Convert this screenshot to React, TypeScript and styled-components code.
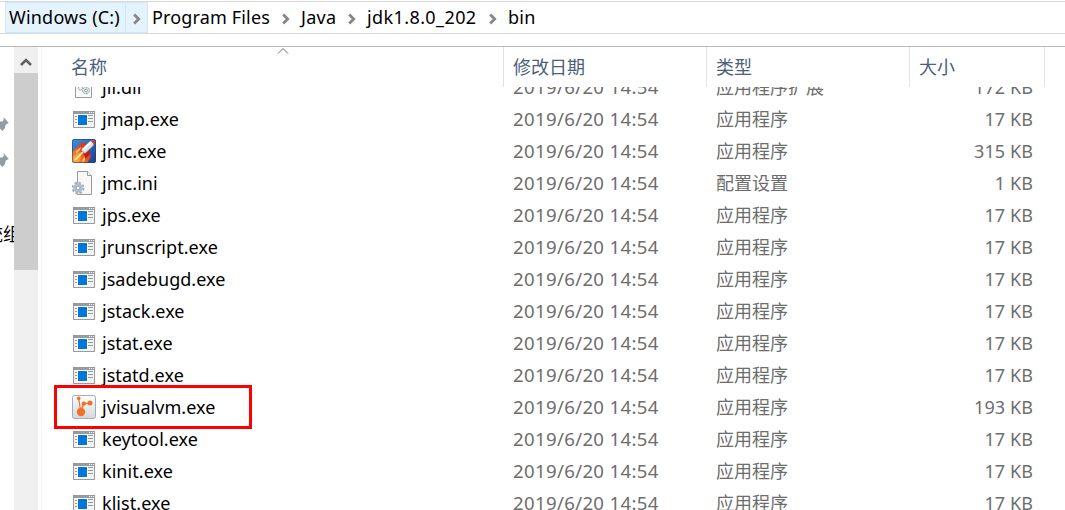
import React, { FunctionComponent } from "react";
import styled, { createGlobalStyle } from "styled-components";

const INK = "#000000";
const META = "#6d6d6d";
const HEADING = "#4c607a";
const LINE = "#e2e2e2";

const GlobalStyle = createGlobalStyle`
  * {
    box-sizing: border-box;
  }
  body {
    margin: 0;
    background: #ffffff;
    overflow: hidden;
    font-family: "Noto Sans", "Noto Sans CJK SC", sans-serif;
    font-size: 18px;
    color: ${INK};
  }
  svg {
    display: block;
    flex: none;
  }
`;

const Window = styled.div`
  display: flex;
  flex-direction: column;
  height: 510px;
  overflow: hidden;
`;

const AddressBar = styled.nav`
  display: flex;
  height: 33px;
  margin-top: 1px;
  padding-left: 5px;
  border-top: 1px solid #d9d9d9;
  border-bottom: 1px solid #d9d9d9;
  flex: none;
`;

const Crumb = styled.div<{ $width: number; $active?: boolean }>`
  display: flex;
  width: ${({ $width }) => $width}px;
  border: 1px solid ${({ $active }) => ($active ? "#cce8ff" : "transparent")};
  background: ${({ $active }) => ($active ? "#e5f3ff" : "transparent")};
`;

const CrumbLabel = styled.span<{ $active?: boolean; $spacing: number }>`
  flex: 1;
  padding-left: 3px;
  line-height: 29px;
  white-space: nowrap;
  letter-spacing: ${({ $spacing }) => $spacing}px;
  border-right: 1px solid
    ${({ $active }) => ($active ? "#cce8ff" : "transparent")};
`;

const CrumbArrow = styled.span`
  display: flex;
  align-items: center;
  justify-content: center;
  width: 21px;
  padding-top: 2px;
`;

const Body = styled.div`
  display: flex;
  flex: 1;
  min-height: 0;
  margin-top: 12px;
  border-top: 1px solid #b9b9b9;
`;

const Sidebar = styled.aside`
  display: flex;
  flex-direction: column;
  width: 14px;
  padding-top: 69px;
  overflow: hidden;
`;

const PinSlot = styled.div`
  height: 36px;
`;

const SidebarLabel = styled.div`
  display: flex;
  justify-content: flex-end;
  margin: 31px -7px 0 0;
  line-height: 30px;
  white-space: nowrap;
`;

const Scrollbar = styled.div`
  width: 24px;
  background: #f0f0f0;
`;

const ScrollButton = styled.div`
  display: flex;
  align-items: center;
  justify-content: center;
  height: 26px;
  padding-top: 4px;
`;

const ScrollThumb = styled.div`
  height: 197px;
  background: #cdcdcd;
`;

const FileList = styled.main`
  display: flex;
  flex-direction: column;
  flex: 1;
  margin-left: 3px;
  border-left: 1px solid #f2f2f2;
  min-width: 0;
`;

const Columns = styled.div`
  display: grid;
  grid-template-columns: 462px 203px 203px 135px;
`;

const HeaderRow = styled(Columns)`
  height: 40px;
  flex: none;
`;

const HeaderCell = styled.div<{ $indent: number }>`
  position: relative;
  height: 40px;
  padding-left: ${({ $indent }) => $indent}px;
  line-height: 41px;
  color: ${HEADING};
  border-right: 1px solid ${LINE};
`;

const SortMark = styled.svg`
  position: absolute;
  left: 235px;
  top: 0;
`;

const Rows = styled.div`
  flex: 1;
  overflow: hidden;
`;

const RowStack = styled.div`
  margin-top: -16px;
`;

const Row = styled(Columns)`
  position: relative;
  height: 32px;
  line-height: 32px;
  white-space: nowrap;
`;

const NameCell = styled.div`
  display: flex;
  align-items: center;
  padding-left: 30px;
`;

const FileName = styled.span`
  margin-left: 6px;
  letter-spacing: 0.05px;
`;

const MetaCell = styled.div`
  padding-left: 9px;
  color: ${META};
`;

const DateCell = styled(MetaCell)`
  font-size: 18.6px;
  letter-spacing: 0.34px;
`;

const SizeCell = styled(MetaCell)`
  padding-right: 12px;
  text-align: right;
  letter-spacing: 0.1px;
`;

const Highlight = styled.div`
  position: absolute;
  left: 12px;
  top: -6px;
  width: 198px;
  height: 44px;
  border: 3px solid #fe0000;
`;

const Pin = () => (
  <svg width="9" height="16" viewBox="0 0 9 16">
    <path d="M3.5 1L8.8 7L7.5 7.5L5.5 9L5 12L2.5 15L0 12.5V5.5H2.5L3.8 4Z" fill="#929ca3" />
  </svg>
);

const AppIcon = () => (
  <svg width="24" height="24" viewBox="0 0 24 24">
    <path d="M1 4H23V21H1Z" fill="#f3f3f3" />
    <path d="M1 4H23V7H1Z" fill="#9b9b9b" />
    <path d="M1.5 4.5H22.5V20.5H1.5Z" fill="none" stroke="#999" />
    <path d="M17 5.5H18M19 5.5H20M21 5.5H22" stroke="#fff" />
    <path d="M3 9.5H5M3 12.5H5M3 15.5H5M16 8.5H21M16 11.5H21M16 14.5H21" stroke="#9a9a9a" />
    <path d="M5 7H16V19H5Z" fill="#fff" />
    <path d="M6 8H15V18H6Z" fill="#0078d7" />
  </svg>
);

const DllIcon = () => (
  <svg width="24" height="24" viewBox="0 0 24 24">
    <path d="M3.5 1.5H19.5V22.5H3.5Z" fill="#fafafa" stroke="#999" />
    <circle cx="8.5" cy="13" r="2" fill="none" stroke="#aaa" />
    <circle cx="14" cy="15.5" r="3.4" fill="#e4ebef" stroke="#8d9ba4" strokeDasharray="2 1" />
    <circle cx="14" cy="15.5" r="1.4" fill="#fff" stroke="#8d9ba4" />
  </svg>
);

const IniIcon = () => (
  <svg width="24" height="24" viewBox="0 0 24 24">
    <path d="M5.5 .5H15.5L19.5 4.5V23.5H5.5Z" fill="#f8f8f8" stroke="#999" />
    <path d="M15.5 .5V4.5H19.5" fill="#fff" stroke="#999" />
    <circle cx="6" cy="17" r="5.2" fill="none" stroke="#9eb0bd" strokeWidth="2.4" strokeDasharray="2.3 1.78" />
    <circle cx="6" cy="17" r="3.5" fill="#dce5eb" stroke="#b0c0cc" strokeWidth="2.6" />
    <circle cx="6" cy="17" r="1.9" fill="#fff" stroke="#70808c" strokeWidth=".7" />
  </svg>
);

const JmcIcon = () => (
  <svg width="24" height="24" viewBox="0 0 24 24">
    <defs>
      <linearGradient id="sky" x1="0" y1="0" x2="1" y2="1">
        <stop offset="0" stopColor="#3c92dc" />
        <stop offset="1" stopColor="#173f93" />
      </linearGradient>
      <linearGradient id="flame" x1="1" y1="0" x2="0" y2="1">
        <stop offset="0" stopColor="#d92118" />
        <stop offset=".5" stopColor="#ee4c22" />
        <stop offset="1" stopColor="#ffb43e" />
      </linearGradient>
    </defs>
    <rect width="24" height="24" rx="2" fill="url(#sky)" />
    <path d="M0 13L5 8L11 3L14 5L12 10L18 13L19 18L15 24H2L0 22Z" fill="url(#flame)" />
    <path d="M0 19L6 14L10 13L7 24H2L0 22Z" fill="#fba33a" />
    <path d="M4 12L9 8L8 11L4 15ZM10 22L13 16L14 18L12 23Z" fill="#ffcf6b" />
    <path d="M12 14L17 10L18 15L13 20Z" fill="#b71c18" />
    <path d="M9 11L17 3Q20 1 22.5 1.5Q23 4 21 7L13 14.5Z" fill="#dfe4e8" stroke="#737f8c" strokeWidth=".7" />
    <path d="M11 10.5L19 3" stroke="#fff" strokeWidth="1.8" />
    <path d="M19 2Q21.5 1 23 1.5Q23 4 22 5.5Z" fill="#e03426" />
    <path d="M3 21L11 13" stroke="#fff0a0" strokeWidth="1.7" />
    <rect x=".5" y=".5" width="23" height="23" rx="2" fill="none" stroke="#2d3e65" strokeOpacity=".6" />
  </svg>
);

const VisualVmIcon = () => (
  <svg width="24" height="24" viewBox="0 0 24 24">
    <defs>
      <linearGradient id="plate" x1="0" y1="0" x2="0" y2="1">
        <stop offset="0" stopColor="#fbfcfd" />
        <stop offset="1" stopColor="#d3d8dd" />
      </linearGradient>
    </defs>
    <rect x=".5" y=".5" width="23" height="23" rx="2" fill="url(#plate)" stroke="#9bafbd" />
    <path d="M8.7 17L6.7 3M8.7 17L11.5 9L18 7.7" fill="none" stroke="#f37021" strokeWidth="1.2" />
    <circle cx="9" cy="17" r="4.2" fill="#f37021" />
    <circle cx="11.8" cy="8.7" r="2.1" fill="#f37021" />
    <circle cx="6.7" cy="3.4" r="1.8" fill="#f37021" />
    <circle cx="18" cy="7.9" r="2.5" fill="#f37021" />
  </svg>
);

const icons = {
  app: AppIcon,
  dll: DllIcon,
  ini: IniIcon,
  jmc: JmcIcon,
  visualvm: VisualVmIcon,
};

interface FileEntry {
  name: string;
  size: string;
  type?: string;
  icon?: keyof typeof icons;
  marked?: boolean;
}

const files: FileEntry[] = [
  { name: "jli.dll", size: "172 KB", type: "应用程序扩展", icon: "dll" },
  { name: "jmap.exe", size: "17 KB" },
  { name: "jmc.exe", size: "315 KB", icon: "jmc" },
  { name: "jmc.ini", size: "1 KB", type: "配置设置", icon: "ini" },
  { name: "jps.exe", size: "17 KB" },
  { name: "jrunscript.exe", size: "17 KB" },
  { name: "jsadebugd.exe", size: "17 KB" },
  { name: "jstack.exe", size: "17 KB" },
  { name: "jstat.exe", size: "17 KB" },
  { name: "jstatd.exe", size: "17 KB" },
  { name: "jvisualvm.exe", size: "193 KB", icon: "visualvm", marked: true },
  { name: "keytool.exe", size: "17 KB" },
  { name: "kinit.exe", size: "17 KB" },
  { name: "klist.exe", size: "17 KB" },
];

const crumbs = [
  { label: "Windows (C:)", width: 143, spacing: 0.2, active: true },
  { label: "Program Files", width: 149, spacing: 0.15 },
  { label: "Java", width: 66, spacing: 0.3 },
  { label: "jdk1.8.0_202", width: 141, spacing: 0.4 },
  { label: "bin", width: 60, spacing: 0.3 },
];

interface FileRowParams {
  file: FileEntry;
}

const FileRow: FunctionComponent<FileRowParams> = ({ file }) => {
  const Icon = icons[file.icon || "app"];
  return (
    <Row>
      <NameCell>
        <Icon />
        <FileName>{file.name}</FileName>
      </NameCell>
      <DateCell>2019/6/20 14:54</DateCell>
      <MetaCell>{file.type || "应用程序"}</MetaCell>
      <SizeCell>{file.size}</SizeCell>
      {file.marked && <Highlight />}
    </Row>
  );
};

const App: FunctionComponent = () => {
  return (
    <Window>
      <GlobalStyle />
      <AddressBar>
        {crumbs.map(({ label, width, spacing, active }, i) => (
          <Crumb key={label} $width={width} $active={active}>
            <CrumbLabel $active={active} $spacing={spacing}>
              {label}
            </CrumbLabel>
            {i < crumbs.length - 1 && (
              <CrumbArrow>
                <svg width="8" height="12" viewBox="0 0 8 12">
                  <path d="M1.2 1.5L5.7 6L1.2 10.5" fill="none" stroke="#868686" strokeWidth="2.8" />
                </svg>
              </CrumbArrow>
            )}
          </Crumb>
        ))}
      </AddressBar>
      <Body>
        <Sidebar>
          <PinSlot>
            <Pin />
          </PinSlot>
          <PinSlot>
            <Pin />
          </PinSlot>
          <SidebarLabel>系统组</SidebarLabel>
        </Sidebar>
        <Scrollbar>
          <ScrollButton>
            <svg width="12" height="10" viewBox="0 0 12 10">
              <path d="M1 8L6 3L11 8" fill="none" stroke="#606060" strokeWidth="2.5" />
            </svg>
          </ScrollButton>
          <ScrollThumb />
        </Scrollbar>
        <FileList>
          <HeaderRow>
            <HeaderCell $indent={29}>
              名称
              <SortMark width="12" height="8" viewBox="0 0 12 8">
                <path d="M1 6.5L6 1.5L11 6.5" fill="none" stroke="#6d6d6d" />
              </SortMark>
            </HeaderCell>
            <HeaderCell $indent={9}>修改日期</HeaderCell>
            <HeaderCell $indent={9}>类型</HeaderCell>
            <HeaderCell $indent={9}>大小</HeaderCell>
          </HeaderRow>
          <Rows>
            <RowStack>
              {files.map((file) => (
                <FileRow key={file.name} file={file} />
              ))}
            </RowStack>
          </Rows>
        </FileList>
      </Body>
    </Window>
  );
};

export default App;
